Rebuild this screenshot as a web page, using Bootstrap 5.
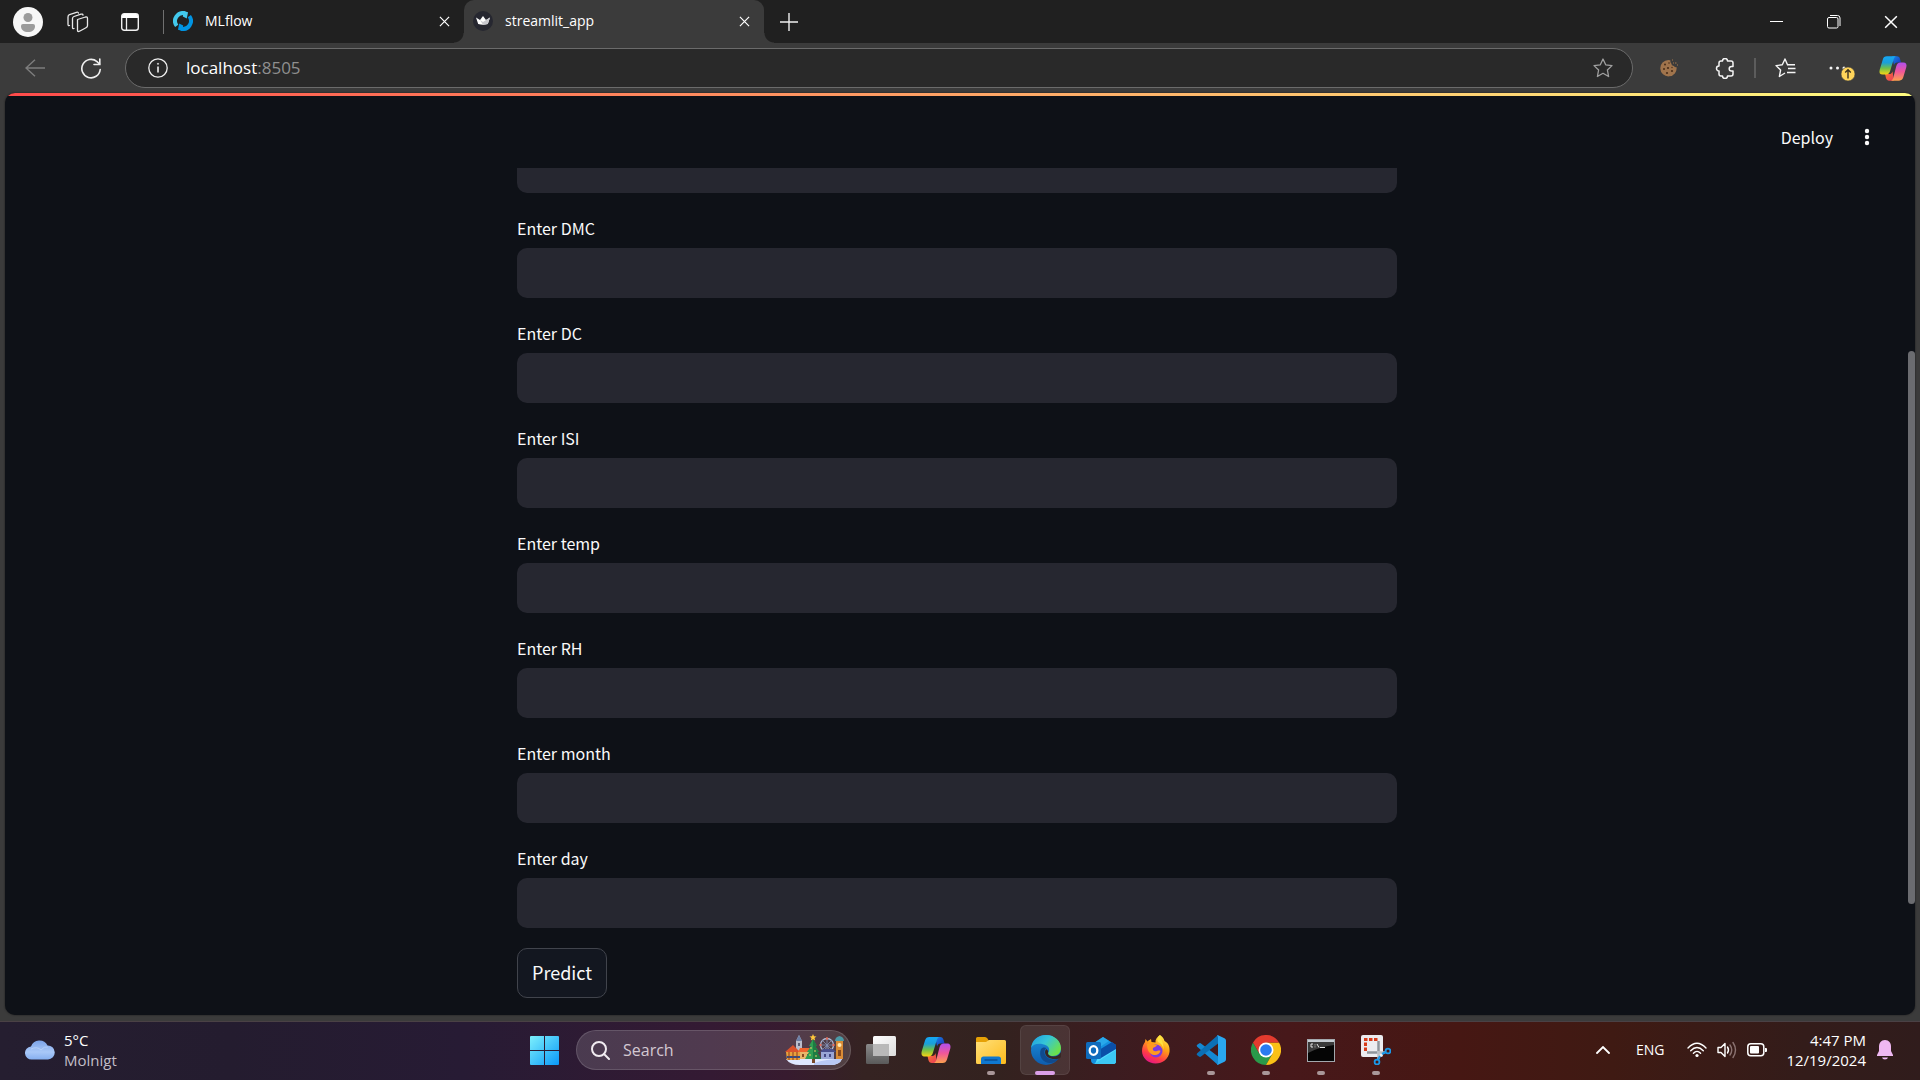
<!DOCTYPE html>
<html lang="en" data-bs-theme="dark">
<head>
<meta charset="utf-8">
<meta name="viewport" content="width=device-width, initial-scale=1">
<title>streamlit_app</title>
<link rel="stylesheet" href="https://cdn.jsdelivr.net/npm/bootstrap@5.3.0/dist/css/bootstrap.min.css">
<style>
  body { background: #3b3b3b; font-family: "Open Sans", "Noto Sans", sans-serif; font-size: 14px; line-height: 20px; color: #fff; }
  svg { display: block; flex: none; }
  svg:not([fill]) { fill: none; }
  button { color: inherit; }
  .plain { background: none; border: 0; padding: 0; display: flex; align-items: center; justify-content: center; flex: none; }

  /* Browser tab strip */
  .tabstrip { background: #202020; height: 43px; padding: 0 1px 0 13px; }
  .tab-rule { width: 1px; height: 24px; background: #707070; }
  .browser-tab { width: 300px; padding: 0 14px 9px 9px; height: 43px; position: relative; color: #fff; text-decoration: none; }
  .browser-tab > * { margin-top: 8px; }
  .browser-tab.current { background: #3b3b3b; border-radius: 10px 10px 0 0; }
  .browser-tab.current::before, .browser-tab.current::after { content: ""; position: absolute; bottom: 0; width: 10px; height: 10px; margin: 0; }
  .browser-tab.current::before { left: -10px; background: radial-gradient(circle at 0 0, transparent 9px, #3b3b3b 10px); }
  .browser-tab.current::after { right: -10px; background: radial-gradient(circle at 100% 0, transparent 9px, #3b3b3b 10px); }
  .win-btn { width: 57px; height: 42px; }

  /* Browser toolbar */
  .toolbar { height: 50px; padding: 0 3px 0 7px; }
  .tool-btn { width: 56px; height: 40px; }
  .tool-btn.copilot { width: 48px; }
  .address { height: 40px; border: 1px solid #6b6b6b; border-radius: 20px; background: #292929; padding: 0 19px 0 22px; margin: 0 8px 0 6px; }
  .address-text { font-size: 17px; line-height: 24px; margin-left: 18px; }
  .address-text span { color: #8f8f8f; }

  /* Page */
  .page { background: #0e1117; border-radius: 10px; margin: 0 5px 6px; overflow: hidden; position: relative; font-family: "Noto Sans CJK SC", sans-serif; color: #fafafa; box-shadow: 0 0 2px #181818; }
  .ribbon { height: 3px; background: linear-gradient(90deg, #ff4b4b, #fffd80); }
  .page-head { height: 72px; padding: 12px 42px 2px 0; }
  .deploy { font-size: 16px; line-height: 24px; }
  .form-view { overflow: hidden; min-height: 0; padding: 0 6px 17px 0; }
  .form-col { width: 100%; max-width: 880px; gap: 20px; }
  .field-label { font-size: 16px; line-height: 30px; margin: 0 0 5px; display: block; }
  .field-box { height: 50px; background: #262730; border: 0; border-radius: 10px; color: #fafafa; }
  .predict.btn { background: #131720; border: 1px solid #41444c; border-radius: 10px; height: 50px; padding: 0 14px 2px; font-size: 18px; line-height: 28px; color: #fafafa; }
  .scroll-thumb { position: absolute; right: 0; top: 28%; height: 60%; width: 7px; border-radius: 4px; background: #6b6c70; }

  /* Taskbar */
  .taskbar { height: 59px; padding-bottom: 2px; border-top: 1px solid #4a4145; background: linear-gradient(90deg, #251e30 0, #241c2f 12%, #271b34 24%, #341a33 37%, #371b2f 41%, #352322 45%, #33221f 52%, #3c1c20 58%, #47181a 67%, #461713 76%, #3f1a13 84%, #331c1a 94%, #301c1c 100%); }
  .side { flex: 1 1 0; }
  .weather { margin-left: 25px; }
  .weather-text, .clock { font-size: 15px; line-height: 20px; }
  .weather-text span { color: #c3bec7; }
  .task-btn { width: 55px; height: 56px; position: relative; }
  .task-btn.running::after { content: ""; position: absolute; bottom: 3px; left: 24px; width: 8px; height: 4px; border-radius: 2px; background: #a99799; }
  .task-btn.active::before { content: ""; position: absolute; left: 2px; top: 3px; width: 50px; height: 50px; border-radius: 6px; background: #ffffff18; border: 1px solid #ffffff12; }
  .task-btn.active::after { left: 17px; width: 20px; background: #dba0e8; }
  .task-btn svg { position: relative; }
  .task-search { width: 275px; height: 40px; margin: 0 2px 0 4px; border-radius: 20px; background: #ffffff24; border: 1px solid #ffffff24; padding: 0 6px 0 14px; overflow: hidden; }
  .task-search input { background: none; border: 0; outline: 0; padding: 0; margin-left: 13px; width: 100px; flex: 1; font-size: 16px; color: #d8d0d8; }
  .task-search input::placeholder { color: #d3c8d2; opacity: 1; }
  .clock { margin: 0 11px 0 19px; }
  .bell { margin-right: 27px; }
</style>
<script src="https://cdn.jsdelivr.net/npm/bootstrap@5.3.0/dist/js/bootstrap.bundle.min.js"></script>
</head>
<body class="vh-100 d-flex flex-column overflow-hidden">

<svg width="0" height="0" class="position-absolute" aria-hidden="true">
  <defs>
    <linearGradient id="cpA" x1="0" y1="0" x2="0" y2="1"><stop offset="0" stop-color="#15a7f5"/><stop offset=".35" stop-color="#1b9fd8"/><stop offset=".65" stop-color="#6fc04a"/><stop offset="1" stop-color="#f7d414"/></linearGradient>
    <linearGradient id="cpB" x1="0" y1="0" x2="0" y2="1"><stop offset="0" stop-color="#b04ff0"/><stop offset=".5" stop-color="#f0569a"/><stop offset="1" stop-color="#fca04e"/></linearGradient>
    <linearGradient id="cpC" x1="0" y1="0" x2="1" y2="1"><stop offset="0" stop-color="#1a86e8"/><stop offset="1" stop-color="#1730b8"/></linearGradient>
    <linearGradient id="cpD" x1="0" y1="0" x2="1" y2="1"><stop offset="0" stop-color="#fb7a2c"/><stop offset="1" stop-color="#e83a5c"/></linearGradient>
    <symbol id="copilot" viewBox="0 0 30 28">
      <path d="M14 1h5c2.200 0 3 1 3.600 3l1 3.500h-4c-2 0-3 1-3.500 3z" fill="url(#cpC)"/>
      <path d="M16 27h-5c-2.200 0-3-1-3.600-3L6.500 20H11c2 0 3-1 3.500-3z" fill="url(#cpD)"/>
      <path d="M8.500 1H18c-1.500 1-2 2-2.500 4L12 16.500C11.300 19 10 20.500 7.500 20.500H4C1 20.500 0 18.500.7 15.500L4 4.500C4.800 2 6 1 8.500 1z" fill="url(#cpA)"/>
      <path d="M21.500 27H13c1.500-1 2-2 2.500-4L18.500 11.500C19.200 9 20.500 7.500 23 7.500h3c3 0 4 2 3.300 5L26 23.500c-.8 2.500-2 3.500-4.500 3.500z" fill="url(#cpB)"/>
    </symbol>
    <symbol id="cross" viewBox="0 0 12 12"><path d="M1 1l10 10M11 1L1 11" stroke="#fff" stroke-width="1.300"/></symbol>
  </defs>
</svg>

<header>
  <div class="tabstrip d-flex align-items-center">
    <button class="plain" aria-label="Profile"><svg width="30" height="30" viewBox="0 0 30 30"><circle cx="15" cy="15" r="15" fill="#f7f7f7"/><circle cx="15" cy="10.500" r="4.500" fill="#9b9b9b"/><path d="M8 19q0-2 2-2h10q2 0 2 2c0 4-3 6-7 6s-7-2-7-6z" fill="#9b9b9b"/></svg></button>
    <button class="plain" aria-label="Workspaces" style="margin-left:24px"><svg width="22" height="22" viewBox="0 0 22 22" stroke="#e8e8e8" stroke-width="1.300" stroke-linejoin="round" stroke-linecap="round"><path d="M10.500 8.500L18.500 6q2-.5 2 1.500v7q0 1.500-1.500 2.200l-6.500 3.500q-2 1-2-1z"/><path d="M7 17.500q-1.500.5-1.500-1V7.500Q5.500 6 7 5.500l7-2.300q1.800-.5 2 1"/><path d="M2.500 14.500Q1 15 1 13.200V6q0-1.800 1.500-2.300L9.500 1.300q1.600-.5 2 .8"/></svg></button>
    <button class="plain" aria-label="Tab actions" style="margin-left:32px"><svg width="18" height="18" viewBox="0 0 18 18"><rect x=".7" y=".7" width="16.600" height="16.600" rx="2.500" stroke="#f0f0f0" stroke-width="1.400"/><path d="M1 5V3q0-2 2-2h12q2 0 2 2v2z" fill="#fff"/><path d="M5.500 5v12" stroke="#f0f0f0" stroke-width="1.300"/></svg></button>
    <div class="tab-rule" style="margin-left:24px"></div>
    <a class="browser-tab d-flex align-items-center" href="#">
      <svg width="20" height="20" viewBox="0 0 20 20" stroke-width="4"><path d="M3.700 14.900A8 8 0 0 1 12 2.300" stroke="#43c9ed"/><path d="M16.300 5.100A8 8 0 0 1 8 17.700" stroke="#0194e2"/><path d="M10.500 0l4.500 1.200-1.200 6.300-4-2z" fill="#43c9ed"/><path d="M9.500 20L5 18.800l1.200-6.300 4 2z" fill="#0194e2"/></svg>
      <span style="margin-left:12px">MLflow</span>
      <svg class="ms-auto" width="11" height="11"><use href="#cross"/></svg>
    </a>
    <a class="browser-tab current d-flex align-items-center" href="#">
      <svg width="20" height="20" viewBox="0 0 20 20"><circle cx="10" cy="10" r="10" fill="#262730"/><path d="M3 6.500l4 2.500 3-4 3 4 4-2.500-2.200 6.500q-4.800 1.500-9.600 0z" fill="#fff"/><path d="M7 9l3 2 3-2 4-2.500-2.200 6.500-4.800.8z" fill="#c9c9cf"/></svg>
      <span style="margin-left:12px">streamlit_app</span>
      <svg class="ms-auto" width="11" height="11"><use href="#cross"/></svg>
    </a>
    <button class="plain" aria-label="New tab" style="margin-left:16px"><svg width="18" height="18"><path d="M9 0v18M0 9h18" stroke="#f0f0f0" stroke-width="1.400"/></svg></button>
    <div class="ms-auto d-flex">
      <button class="plain win-btn" aria-label="Minimize"><svg width="13" height="13"><path d="M0 6.500h13" stroke="#fff"/></svg></button>
      <button class="plain win-btn" aria-label="Restore"><svg width="14" height="14" stroke="#fff"><rect x=".5" y="2.500" width="10.500" height="10.500" rx="1.500"/><path d="M3 .5h7.500q2.500 0 2.500 2.500v8"/></svg></button>
      <button class="plain win-btn" aria-label="Close"><svg width="14" height="14" viewBox="0 0 12 12"><use href="#cross"/></svg></button>
    </div>
  </div>

  <div class="toolbar d-flex align-items-center">
    <button class="plain tool-btn" aria-label="Back"><svg width="20" height="18" stroke="#7d7d7d" stroke-width="1.400"><path d="M20 9H1M10 .7L1 9l9 8.300"/></svg></button>
    <button class="plain tool-btn" aria-label="Reload"><svg width="20" height="21" viewBox="0 0 20 21" stroke="#f0f0f0" stroke-width="1.600" stroke-linecap="round"><path d="M19.200 11.500A9.200 9.200 0 1 1 16 3.600l2.500 2.400"/><path d="M18.800 1v5.500H13"/></svg></button>
    <div class="address d-flex align-items-center flex-grow-1">
      <svg width="20" height="20" stroke="#f0f0f0" stroke-width="1.300"><circle cx="10" cy="10" r="9.200"/><path d="M10 8.500v6" stroke-width="1.600"/><circle cx="10" cy="5.800" r=".6" fill="#fff" stroke-width=".7"/></svg>
      <div class="address-text">localhost<span>:8505</span></div>
      <button class="plain ms-auto" aria-label="Add to favorites"><svg width="20" height="20" viewBox="0 0 20 20" stroke="#a0a0a0" stroke-width="1.300" stroke-linejoin="round"><path d="M10 1l2.700 5.800 6.300.8-4.600 4.400 1.200 6.500-5.600-3.200-5.600 3.200L5.600 12 1 7.600l6.300-.8z"/></svg></button>
    </div>
    <button class="plain tool-btn" aria-label="Cookies"><svg width="18" height="18" viewBox="0 0 18 18"><path d="M8.500 1q1.500 0 2 .5-.5 2 .8 3 0 2.300 2.500 2.500 1.200 1.500 2.800 1.200A8.200 8.200 0 1 1 8.500 1z" fill="#a0744c"/><g fill="#4a2e1a"><circle cx="5" cy="5.500" r="1"/><circle cx="9" cy="4" r=".8"/><circle cx="4" cy="10" r="1"/><circle cx="8" cy="9" r="1.100"/><circle cx="7" cy="14" r="1.100"/><circle cx="12" cy="12" r="1.100"/><circle cx="12" cy="8.500" r=".7"/></g><path d="M12 1h1M15 4h1.500M17 6h1M13 4h1" stroke="#a5784c"/></svg></button>
    <button class="plain tool-btn" aria-label="Extensions"><svg width="20" height="21" viewBox="1 0 20 21" stroke="#f5f5f5" stroke-width="1.500" stroke-linejoin="round"><path d="M8.500 3a2.500 2.500 0 0 1 5 0H17q2 0 2 2v3.500h-1.500a2.300 2.300 0 0 0 0 4.600H19V16q0 2-2 2h-3.500a2.500 2.500 0 0 1-5 0H7q-2 0-2-2v-3a2.500 2.500 0 0 1 0-5V5q0-2 2-2z"/></svg></button>
    <div style="width:2px;height:20px;background:#5c5c5c;margin:0 1px"></div>
    <button class="plain tool-btn" aria-label="Favorites"><svg width="21" height="20" viewBox="0 0 21 20" stroke="#f5f5f5" stroke-width="1.400" stroke-linejoin="round"><path d="M13 7l-.5-.2L10 1 7.300 6.800 1 7.600 5.600 12l-1.200 6.500L10 15M12 6.800h8M13 10.500h7.500M12 14.500h8.500"/></svg></button>
    <button class="plain tool-btn" aria-label="Settings and more"><svg width="28" height="26" viewBox="-2 0 28 26"><g fill="#f5f5f5"><circle cx="2" cy="13" r="1.500"/><circle cx="8.500" cy="13" r="1.500"/><circle cx="15" cy="13" r="1.500"/></g><circle cx="19" cy="19" r="7" fill="#ffd45a" stroke="#3b3b3b" stroke-width=".6"/><path d="M19 23.500V15M16.200 17.500l2.800-2.800 2.800 2.800" stroke="#3b3120" stroke-width="1.400"/></svg></button>
    <button class="plain tool-btn copilot" aria-label="Copilot"><svg width="28" height="27"><use href="#copilot"/></svg></button>
  </div>
</header>

<main class="page flex-grow-1 d-flex flex-column">
  <div class="ribbon flex-shrink-0"></div>
  <div class="page-head d-flex align-items-center justify-content-end flex-shrink-0">
    <button class="plain deploy">Deploy</button>
    <button class="plain" aria-label="Menu" style="margin-left:28px"><svg width="12" height="18" fill="#fafafa"><circle cx="6" cy="3" r="2.200"/><circle cx="6" cy="9" r="2.200"/><circle cx="6" cy="15" r="2.200"/></svg></button>
  </div>
  <div class="form-view flex-grow-1 d-flex flex-column justify-content-end align-items-center">
    <form class="form-col d-flex flex-column flex-shrink-0">
      <input class="field-box form-control" type="text" aria-label="Value">
      <div><label class="field-label" for="dmc">Enter DMC</label><input class="field-box form-control" type="text" id="dmc"></div>
      <div><label class="field-label" for="dc">Enter DC</label><input class="field-box form-control" type="text" id="dc"></div>
      <div><label class="field-label" for="isi">Enter ISI</label><input class="field-box form-control" type="text" id="isi"></div>
      <div><label class="field-label" for="temp">Enter temp</label><input class="field-box form-control" type="text" id="temp"></div>
      <div><label class="field-label" for="rh">Enter RH</label><input class="field-box form-control" type="text" id="rh"></div>
      <div><label class="field-label" for="month">Enter month</label><input class="field-box form-control" type="text" id="month"></div>
      <div><label class="field-label" for="day">Enter day</label><input class="field-box form-control" type="text" id="day"></div>
      <button class="predict btn align-self-start" type="button">Predict</button>
    </form>
  </div>
  <div class="scroll-thumb"></div>
</main>

<footer class="taskbar d-flex align-items-center flex-shrink-0">
  <div class="side">
    <div class="weather d-flex align-items-center">
      <svg width="30" height="20" viewBox="0 0 30 20"><defs><linearGradient id="cl" x1="0" y1="0" x2="0" y2="1"><stop offset="0" stop-color="#7ba3e8"/><stop offset=".6" stop-color="#a9c8f8"/><stop offset="1" stop-color="#86aff0"/></linearGradient></defs><path d="M7 19.500a6.500 6.500 0 0 1-1-13 9 9 0 0 1 16.500-1A7 7 0 0 1 23 19.500z" fill="url(#cl)"/><path d="M6 9q6-3 10 1 3-4 7-3" stroke="#c3dafc" stroke-width="1" opacity=".6"/></svg>
      <div class="weather-text d-flex flex-column" style="margin-left:9px">5°C<span>Molnigt</span></div>
    </div>
  </div>

  <div class="d-flex align-items-center">
    <button class="plain task-btn" aria-label="Start"><svg width="29" height="29" viewBox="0 0 29 29"><defs><linearGradient id="wn" x1="0" y1="0" x2="29" y2="29" gradientUnits="userSpaceOnUse"><stop offset="0" stop-color="#7df0fc"/><stop offset="1" stop-color="#0a98f8"/></linearGradient></defs><path d="M0 1q0-1 1-1h13v14H0zM15 0h13q1 0 1 1v13H15zM0 15h14v14H1q-1 0-1-1zM15 15h14v13q0 1-1 1H15z" fill="url(#wn)"/></svg></button>
    <div class="task-search d-flex align-items-center">
      <svg width="19" height="19" stroke="#f0ebf0" stroke-width="2" stroke-linecap="round"><circle cx="8" cy="8" r="7"/><path d="M13 13l5 5"/></svg>
      <input type="text" placeholder="Search" aria-label="Search">
      <svg width="60" height="32" viewBox="0 0 60 32">
        <path d="M2 25h56q-2 6-12 6H16Q6 31 2 25z" fill="#dfe8ff"/>
        <path d="M30 29q12-4 28-4-3 6-12 6H30z" fill="#b9c9f5"/>
        <path d="M12 7l3-6 3 6v11h-6z" fill="#b9bccb"/><path d="M12 7l3-6 3 6z" fill="#6d7fa6"/><path d="M14 9h2v3h-2z" fill="#5b5f78"/>
        <path d="M1 18l8-7 7 7z" fill="#d9522c"/><path d="M14 18l2-4h11v4z" fill="#f0652f"/>
        <path d="M2 18h14v8H3z" fill="#e8a03c"/><path d="M3 22h13v2H3z" fill="#2d4f8c"/><path d="M5 18v8M9 18v8M13 18v8" stroke="#8c3c1e"/>
        <path d="M16 18h12v7H16z" fill="#e9b66a"/><path d="M18 20h2v3h-2zM23 20h2v3h-2z" fill="#8a4a22"/>
        <circle cx="43" cy="11" r="6.500" stroke="#aebbd6" stroke-width="1.300"/><path d="M43 4v14M36 11h14M38 6l10 10M48 6L38 16M43 11l-4 10M43 11l4 10" stroke="#8391b5" stroke-width=".8"/><g fill="#e46e5a"><circle cx="43" cy="4.500" r="1.200"/><circle cx="36.500" cy="11" r="1.200"/><circle cx="49.500" cy="11" r="1.200"/></g>
        <path d="M37 17h13v8H37z" fill="#9aa6d6"/><path d="M36 18l3-3h10l3 3z" fill="#4a4f8c"/><path d="M40 20h2v3h-2zM45 20h2v3h-2z" fill="#454a85"/>
        <path d="M52 7h7v18h-7z" fill="#d98c36"/><path d="M51 7q0-4 4.500-5Q60 3 60 7z" fill="#4c9aa6"/><circle cx="55.500" cy="11" r="2" fill="#ffe9b0"/><path d="M54 16h3v6h-3z" fill="#8a4a1c"/>
        <path d="M29 5l4 7h-2l4 6h-2l4 7H21l4-7h-2l4-6h-2z" fill="#2f9e52"/><path d="M29 5l4 7h-2l4 6h-2l4 7h-8z" fill="#1d7c42"/><path d="M28 25h3v4h-3z" fill="#7a4a2a"/><path d="M29 0l1 2.200 2.500.3-2 1.500.7 2.500-2.200-1.300-2.200 1.300.7-2.500-2-1.500 2.500-.3z" fill="#ffc83c"/><g fill="#ffd96a"><circle cx="27" cy="14" r=".8"/><circle cx="31" cy="17" r=".8"/><circle cx="26" cy="21" r=".8"/><circle cx="32" cy="22" r=".8"/></g>
      </svg>
    </div>
    <button class="plain task-btn" aria-label="Task view"><svg width="30" height="28" viewBox="0 0 30 28"><defs><linearGradient id="tv" x1="0" y1="0" x2="1" y2="1"><stop offset="0" stop-color="#fff"/><stop offset="1" stop-color="#dcdcdc"/></linearGradient><linearGradient id="tv2" x1="0" y1="0" x2="0" y2="1"><stop offset="0" stop-color="#8a8a8a"/><stop offset="1" stop-color="#5a5a5a"/></linearGradient></defs><rect x="0" y="8" width="23" height="20" rx="1.500" fill="url(#tv2)"/><rect x="7" y="0" width="23" height="20" rx="1.500" fill="url(#tv)"/><path d="M7 8h16v12H8q-1 0-1-1z" fill="#b9b9b9"/></svg></button>
    <button class="plain task-btn" aria-label="Copilot"><svg width="30" height="28"><use href="#copilot"/></svg></button>
    <button class="plain task-btn running" aria-label="File Explorer"><svg width="30" height="27" viewBox="0 0 30 27"><defs><linearGradient id="fo" x1="0" y1="0" x2="1" y2="1"><stop offset="0" stop-color="#ffe07a"/><stop offset="1" stop-color="#fdbb1c"/></linearGradient></defs><path d="M0 1.500Q0 0 1.500 0H9q1.500 0 2.500 1.500L13 4H20V10H0z" fill="#e6a106"/><path d="M0 5h10l3-2h15.500Q30 3 30 4.500v21q0 1.500-1.500 1.500h-27Q0 27 0 25.500z" fill="url(#fo)"/><path d="M5 27v-5q0-2.500 2.500-2.500h15Q25 19.500 25 22v5z" fill="#0f78d0"/><path d="M8.500 23h13" stroke="#0a4a8c" stroke-width="1.300"/></svg></button>
    <button class="plain task-btn running active" aria-label="Microsoft Edge"><svg width="30" height="30" viewBox="0 0 30 30"><defs><linearGradient id="e1" x1="0" y1="0" x2="1" y2=".6"><stop offset="0" stop-color="#1d9be0"/><stop offset=".5" stop-color="#35c5d8"/><stop offset="1" stop-color="#6be04c"/></linearGradient><linearGradient id="e2" x1="0" y1="0" x2="0" y2="1"><stop offset="0" stop-color="#1c92dc"/><stop offset="1" stop-color="#0e5cae"/></linearGradient></defs><circle cx="15" cy="15" r="15" fill="url(#e2)"/><path d="M0 13C1 5 7 0 15 0c9 0 15 6.500 15 13 0 5-3.500 8-8 8-4 0-5.500-1.500-5-3 2-2 1.500-6-1.500-7.500C10 7.500 2 8 0 13z" fill="url(#e1)"/><path d="M10 14c-3 7 2 14 9 14 4 0 7-2 9.500-5-6 3-14 1-15-5-.3-2 .5-4 2-5-2-1-4.500-.5-5.500 1z" fill="#104a8e"/><path d="M17 18c0 2 2 3.500 5.500 3.500 3 0 6-1.300 7.500-4.500v5l-1.300 1.200C22 25.500 14 23 14 17q0-2 1.500-3 2.500 2 1.500 4z" fill="#382724"/></svg></button>
    <button class="plain task-btn" aria-label="Outlook"><svg width="30" height="27" viewBox="0 0 30 27"><path d="M5 8L17 0l13 8v16q0 3-3 3H9q-4 0-4-4z" fill="#1490df"/><path d="M5 8L17 0l6 4L8 14z" fill="#28a8ea"/><path d="M13 18L30 8v16q0 3-3 3H9z" fill="#50d9ff"/><path d="M13 13l13-8 4 3v4L15 21z" fill="#0a4fa8"/><path d="M8 27l22-14v11q0 3-3 3z" fill="#3cc8f4"/><rect y="5" width="15" height="17" rx="1.500" fill="#0f6cbd"/><ellipse cx="7.500" cy="13.500" rx="3.800" ry="4.300" stroke="#fff" stroke-width="2.300"/></svg></button>
    <button class="plain task-btn" aria-label="Firefox"><svg width="30" height="30" viewBox="0 0 30 30"><defs><linearGradient id="ff" x1=".8" y1="0" x2=".3" y2="1"><stop offset="0" stop-color="#fff44f"/><stop offset=".4" stop-color="#ffa216"/><stop offset=".75" stop-color="#ff3b47"/><stop offset="1" stop-color="#e31587"/></linearGradient></defs><path d="M19 0c3 2 4 4 4.500 6C28 8 29 13 28.500 17c-1 7-7 11.500-14 11.500S1 23 1 16C1 12 2.500 9 4 7l.5-3 2 2.500C8 5 9 5 10 4l.5 3 4 .5C14 5 16 2 19 0z" fill="url(#ff)"/><circle cx="15" cy="16" r="6.500" fill="#7a3be0"/><path d="M6 9c3-1.500 5 0 6 1h4c-1 2-3 2-4 3-1 2 1 4 4 3 2-.7 3-.5 3.500 0-1 3-3.500 4.500-6.500 4-4-.6-7-4-7-11z" fill="#ff9a1f"/><path d="M17 7q5 2 5.500 8 0-6-1.500-9l-2-6q-4 3-2 7z" fill="#ffe23f"/></svg></button>
    <button class="plain task-btn running" aria-label="Visual Studio Code"><svg width="30" height="30" viewBox="0 0 30 30"><path d="M22 30L1.200 11.800q-1.200-1 0-2L3 8.500q1-.8 2 0L24 23z" fill="#1488d2"/><path d="M22 0L1.200 18.200q-1.200 1 0 2L3 21.500q1 .8 2 0L24 7z" fill="#0b6fb5"/><path d="M21.500 0l7 3.200Q30 4 30 5.500v19q0 1.500-1.500 2.300L21.500 30q-.8 0 .5-2V2q-1.300-2-.5-2z" fill="#2aa7f0"/></svg></button>
    <button class="plain task-btn running" aria-label="Chrome"><svg width="30" height="30" viewBox="0 0 30 30"><path d="M2 7.500A15 15 0 0 0 15 30l6.500-11.300H15L8.500 18.700z" fill="#2a9a4a"/><path d="M28 7.500A15 15 0 0 1 15 30l6.500-11.300L15 7.500z" fill="#fbc116"/><path d="M2 7.500A15 15 0 0 1 28 7.500H15L8.500 18.700z" fill="#e33b2e"/><circle cx="15" cy="15" r="7.500" fill="#fff"/><circle cx="15" cy="15" r="5.800" fill="#2a7bf0"/></svg></button>
    <button class="plain task-btn running" aria-label="Command Prompt"><svg width="28" height="23" viewBox="0 0 28 23"><rect x=".5" y=".5" width="27" height="22" fill="#050505" stroke="#a3a8ad"/><path d="M1 1h26v2H1z" fill="#c6ccd2"/><path d="M1 3h26v3Q12 8 1 14z" fill="#3a3a3a"/><path d="M6 5H4v3h2M8 5.500v.8M8 7.500v.8M10 5l2 3.500M13 8.500h5" stroke="#e0e0e0"/></svg></button>
    <button class="plain task-btn running" aria-label="Snipping Tool"><svg width="30" height="30" viewBox="0 0 30 30"><rect width="22" height="22" rx="2" fill="#ececf0"/><path d="M4.500 16V4.500H17" stroke="#d83b1a" stroke-width="3" stroke-dasharray="3.500 1.500"/><path d="M17.500 6v12M6 17.500h12" stroke="#8f959c" stroke-width="2.500"/><path d="M17.500 16v8M16 17.500h8" stroke="#b9bfc5" stroke-width="2.500"/><circle cx="16" cy="27" r="2.400" stroke="#1a98e8" stroke-width="1.800"/><circle cx="27" cy="16" r="2.400" stroke="#1a98e8" stroke-width="1.800"/><path d="M17 25l2-4M25 17l-4 2" stroke="#1a98e8" stroke-width="2"/></svg></button>
  </div>

  <div class="side d-flex align-items-center justify-content-end">
    <button class="plain" aria-label="Show hidden icons"><svg width="14" height="8" stroke="#fff" stroke-width="1.800" stroke-linecap="round"><path d="M1 7l6-6 6 6"/></svg></button>
    <span style="margin:0 23px 0 26px">ENG</span>
    <svg width="20" height="16" viewBox="0 0 20 16" stroke="#fff" stroke-width="1.400" stroke-linecap="round"><path d="M1 6Q10-3.500 19 6M3.700 8.800q6.300-6.500 12.600 0M6.400 11.300q3.600-3.800 7.200 0"/><circle cx="10" cy="13.500" r="1.600" fill="#fff" stroke="none"/></svg>
    <svg style="margin-left:10px" width="20" height="18" viewBox="0 0 20 18" stroke="#fff" stroke-width="1.400" stroke-linecap="round" stroke-linejoin="round"><path d="M1 6.500h3L8 2.500v13L4 11.500H1z"/><path d="M10.500 6q2 3 0 6"/><path d="M13 4q3.500 5 0 10M16 1.500q5 7.500 0 15" stroke="#8b7371"/></svg>
    <svg style="margin-left:10px" width="20" height="14" viewBox="0 0 20 14"><rect x=".8" y=".8" width="16" height="12" rx="3" stroke="#fff" stroke-width="1.500"/><rect x="3" y="3" width="9" height="7.600" rx="1" fill="#fff"/><path d="M18 5h1q1 0 1 1v2q0 1-1 1h-1z" fill="#fff"/></svg>
    <div class="clock text-end">4:47 PM<br>12/19/2024</div>
    <button class="plain bell" aria-label="Notifications"><svg width="16" height="20" viewBox="0 0 16 20" fill="#efb8f2"><path d="M8 0C4 0 2 3 2 6.500V11L0 15v1h16v-1l-2-4V6.500C14 3 12 0 8 0zM5 17.500h6Q10.500 19.500 8 19.500T5 17.500z"/></svg></button>
  </div>
</footer>
</body>
</html>
